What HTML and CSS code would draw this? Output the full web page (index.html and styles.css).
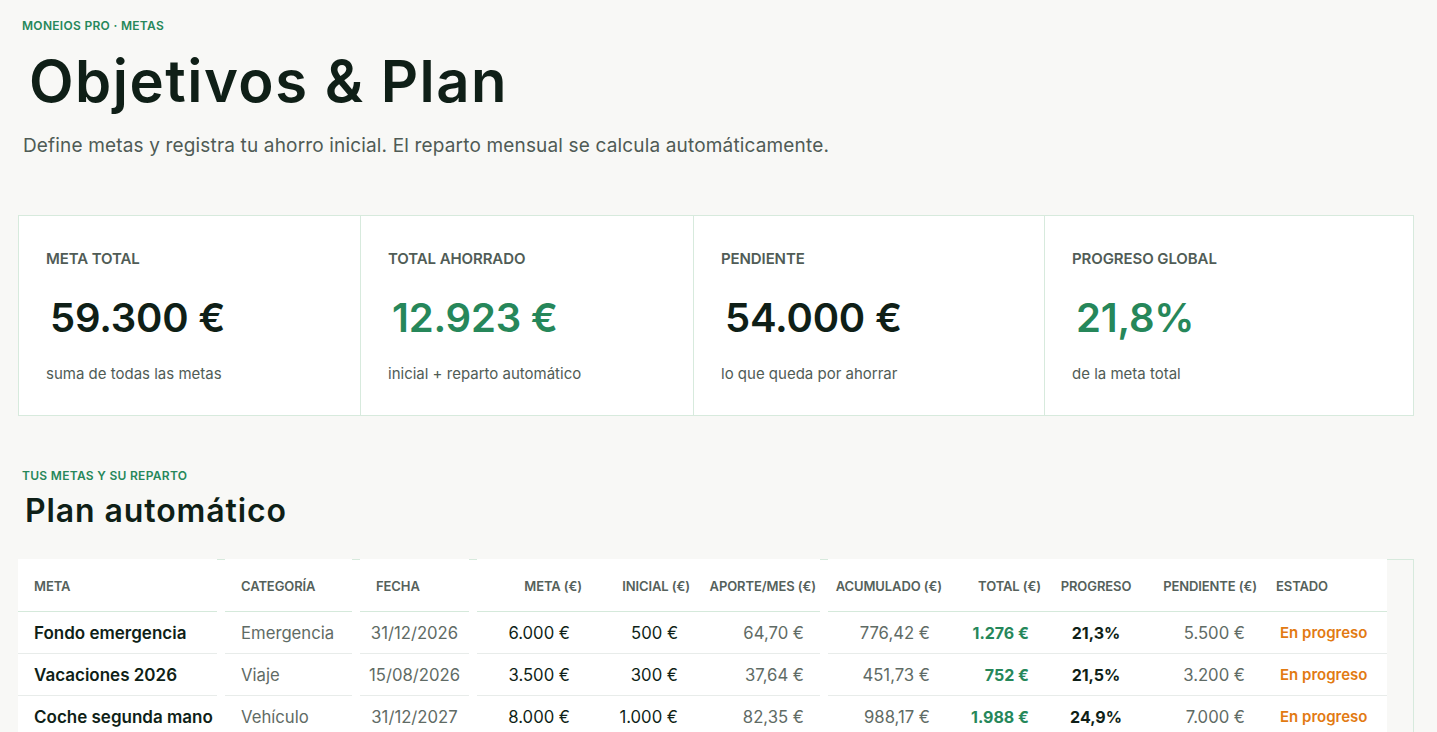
FILE: index.html
```html
<!DOCTYPE html>
<html lang="es">
<head>
<meta charset="utf-8">
<title>Objetivos &amp; Plan</title>
<link rel="stylesheet" href="styles.css">
</head>
<body>
<main class="page">
  <header class="hero">
    <div class="eyebrow">MONEIOS PRO · METAS</div>
    <h1 class="title">Objetivos &amp; Plan</h1>
    <p class="lead">Define metas y registra tu ahorro inicial. El reparto mensual se calcula automáticamente.</p>
  </header>

  <section class="kpis">
    <div class="kpi">
      <div class="kpi-label">META TOTAL</div>
      <div class="kpi-value">59.300 €</div>
      <div class="kpi-sub">suma de todas las metas</div>
    </div>
    <div class="kpi">
      <div class="kpi-label">TOTAL AHORRADO</div>
      <div class="kpi-value green">12.923 €</div>
      <div class="kpi-sub">inicial + reparto automático</div>
    </div>
    <div class="kpi">
      <div class="kpi-label">PENDIENTE</div>
      <div class="kpi-value">54.000 €</div>
      <div class="kpi-sub">lo que queda por ahorrar</div>
    </div>
    <div class="kpi">
      <div class="kpi-label">PROGRESO GLOBAL</div>
      <div class="kpi-value green">21,8%</div>
      <div class="kpi-sub">de la meta total</div>
    </div>
  </section>

  <section class="plan">
    <div class="eyebrow">TUS METAS Y SU REPARTO</div>
    <h2 class="plan-title">Plan automático</h2>
    <div class="table-wrap">
      <table class="goals">
        <colgroup>
          <col class="w1"><col class="w2"><col class="w3"><col class="w4"><col class="w5"><col class="w6"><col class="w7"><col class="w8"><col class="w9"><col class="w10"><col class="w11">
        </colgroup>
        <thead>
          <tr>
            <th class="c-name g">META</th>
            <th class="c-cat g">CATEGORÍA</th>
            <th class="c-date g">FECHA</th>
            <th class="num">META (€)</th>
            <th class="num">INICIAL (€)</th>
            <th class="num g">APORTE/MES (€)</th>
            <th class="num">ACUMULADO (€)</th>
            <th class="num">TOTAL (€)</th>
            <th class="c-prog">PROGRESO</th>
            <th class="num">PENDIENTE (€)</th>
            <th class="c-state">ESTADO</th>
          </tr>
        </thead>
        <tbody>
          <tr>
            <td class="c-name g">Fondo emergencia</td>
            <td class="c-cat g muted">Emergencia</td>
            <td class="c-date g muted">31/12/2026</td>
            <td class="num">6.000 €</td>
            <td class="num">500 €</td>
            <td class="num g muted">64,70 €</td>
            <td class="num muted">776,42 €</td>
            <td class="num total">1.276 €</td>
            <td class="c-prog strong">21,3%</td>
            <td class="num muted">5.500 €</td>
            <td class="c-state state">En progreso</td>
          </tr>
          <tr>
            <td class="c-name g">Vacaciones 2026</td>
            <td class="c-cat g muted">Viaje</td>
            <td class="c-date g muted">15/08/2026</td>
            <td class="num">3.500 €</td>
            <td class="num">300 €</td>
            <td class="num g muted">37,64 €</td>
            <td class="num muted">451,73 €</td>
            <td class="num total">752 €</td>
            <td class="c-prog strong">21,5%</td>
            <td class="num muted">3.200 €</td>
            <td class="c-state state">En progreso</td>
          </tr>
          <tr>
            <td class="c-name g">Coche segunda mano</td>
            <td class="c-cat g muted">Vehículo</td>
            <td class="c-date g muted">31/12/2027</td>
            <td class="num">8.000 €</td>
            <td class="num">1.000 €</td>
            <td class="num g muted">82,35 €</td>
            <td class="num muted">988,17 €</td>
            <td class="num total">1.988 €</td>
            <td class="c-prog strong">24,9%</td>
            <td class="num muted">7.000 €</td>
            <td class="c-state state">En progreso</td>
          </tr>
        </tbody>
      </table>
    </div>
  </section>
</main>
</body>
</html>
```

FILE: styles.css
```css
:root {
  --bg: #f8f8f6;
  --ink: #0f1f17;
  --muted: #58645e;
  --green: #26875a;
  --orange: #e27a12;
  --line: #d7eadd;
  --hline: #d5e9db;
  --rline: #e8ecea;
}

* { box-sizing: border-box; }

html, body {
  margin: 0;
  background: var(--bg);
}

body {
  font-family: Inter, "Noto Sans", "DejaVu Sans", sans-serif;
  color: var(--ink);
}

.page {
  display: flex;
  flex-direction: column;
  padding: 18px 23px 0 18px;
}

.hero {
  display: flex;
  flex-direction: column;
  padding-left: 4px;
}

.eyebrow {
  font-size: 12px;
  line-height: 16px;
  font-weight: 600;
  color: var(--green);
  letter-spacing: 0.3px;
  padding-left: 4px;
}

.hero .eyebrow { padding-left: 0; }

.title {
  margin: 15px 0 0 7px;
  font-size: 58px;
  line-height: 64px;
  font-weight: 600;
  letter-spacing: 1.5px;
  color: var(--ink);
}

.lead {
  margin: 20px 0 0 1px;
  font-size: 19px;
  line-height: 26px;
  font-weight: 400;
  letter-spacing: 0.16px;
  color: #4f5b55;
}

.kpis {
  margin-top: 56px;
  display: grid;
  grid-template-columns: 341px 333px 351px 1fr;
  background: #fff;
  border: 1px solid var(--line);
  height: 201px;
}

.kpi {
  display: flex;
  flex-direction: column;
  padding: 34px 27px 0 27px;
}

.kpi + .kpi {
  border-left: 1px solid var(--line);
}

.kpi-label {
  font-size: 15px;
  line-height: 18px;
  font-weight: 600;
  color: #505c56;
  letter-spacing: -0.1px;
}

.kpi-value {
  margin-top: 26px;
  padding-left: 4px;
  font-size: 40px;
  line-height: 48px;
  font-weight: 600;
  letter-spacing: -0.2px;
  color: var(--ink);
}

.kpi-value.green { color: var(--green); }

.kpi-sub {
  margin-top: 22px;
  font-size: 15px;
  line-height: 20px;
  color: #505c56;
}

.plan {
  margin-top: 52px;
  display: flex;
  flex-direction: column;
}

.plan-title {
  margin: 7px 0 0 7px;
  font-size: 32px;
  line-height: 40px;
  font-weight: 600;
  letter-spacing: 0.9px;
  color: var(--ink);
}

.table-wrap {
  margin-top: 28px;
  border: 1px solid var(--line);
}

.goals {
  margin: -1px 0 0 -1px;
  width: 1369px;
  table-layout: fixed;
  border-collapse: separate;
  border-spacing: 0;
}

.w1 { width: 207px; }
.w2 { width: 135px; }
.w3 { width: 117px; }
.w4 { width: 117px; }
.w5 { width: 108px; }
.w6 { width: 126px; }
.w7 { width: 126px; }
.w8 { width: 99px; }
.w9 { width: 86px; }
.w10 { width: 130px; }
.w11 { width: 118px; }

.goals th,
.goals td {
  white-space: nowrap;
  padding: 0 12px 0 0;
  text-align: left;
}

.goals th {
  height: 53px;
  font-size: 13px;
  font-weight: 600;
  color: #55615b;
  letter-spacing: -0.1px;
  background: linear-gradient(var(--hline), var(--hline)) left bottom / 100% 1px no-repeat, #fff;
}

.goals th.g {
  background:
    linear-gradient(var(--hline), var(--hline)) left bottom / calc(100% - 8px) 1px no-repeat,
    linear-gradient(#fff, #fff) right bottom / 8px calc(100% - 1px) no-repeat,
    linear-gradient(#fff, #fff) left top / calc(100% - 8px) 100% no-repeat;
}

.goals td {
  height: 42px;
  padding-bottom: 1px;
  font-size: 16.7px;
  color: var(--ink);
  background: linear-gradient(var(--rline), var(--rline)) left bottom / 100% 1px no-repeat, #fff;
}

.goals td.g {
  background: linear-gradient(var(--rline), var(--rline)) left bottom / calc(100% - 8px) 1px no-repeat, #fff;
}

.goals .c-name,
.goals .c-cat { padding-left: 16px; }

.goals th.c-date { padding-left: 16px; }
.goals td.c-date { text-align: center; padding-left: 0; padding-right: 8px; }

.goals th.num { text-align: right; padding-right: 12px; }
.goals td.num { text-align: right; padding-right: 24px; }

.goals .c-prog { text-align: center; padding-left: 0; padding-right: 0; }

.goals th.c-state { padding-left: 7px; }
.goals td.c-state { padding-left: 11px; }

.goals td.c-name { font-weight: 600; font-size: 17px; }
.goals td.muted { color: #5f6b65; }
.goals td.total { color: var(--green); font-weight: 700; font-size: 16px; }
.goals td.strong { font-weight: 700; font-size: 16px; }
.goals td.state { color: var(--orange); font-weight: 600; font-size: 15px; }
```
